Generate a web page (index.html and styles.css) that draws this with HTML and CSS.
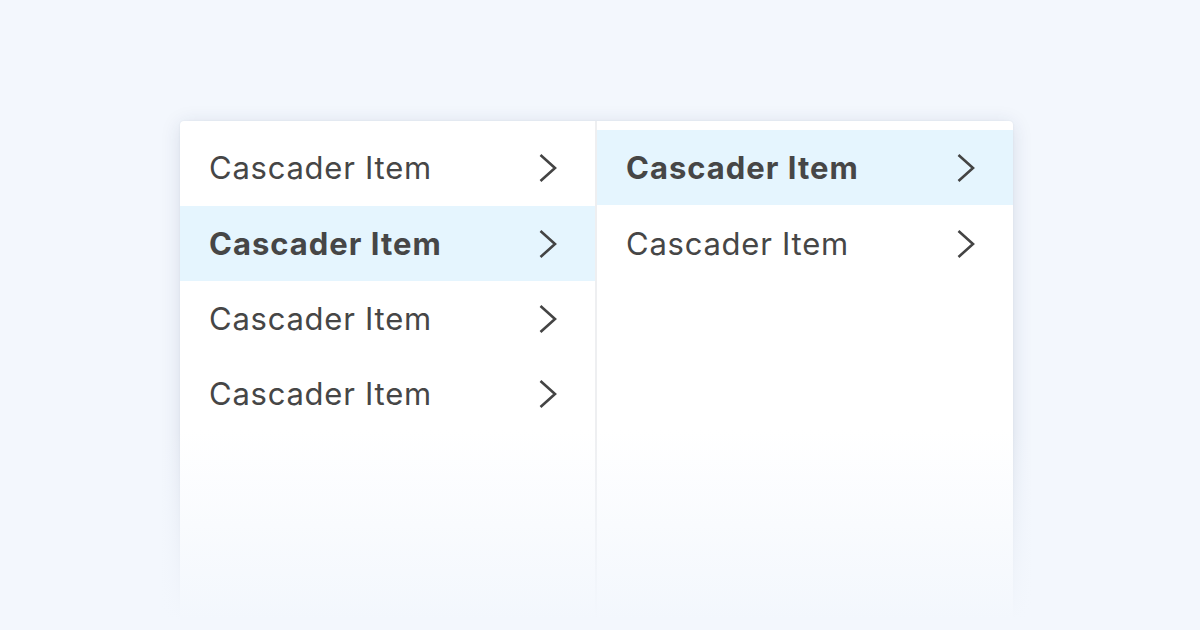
FILE: index.html
```html
<!DOCTYPE html>
<html>
<head>
<meta charset="utf-8">
<link rel="stylesheet" href="styles.css">
</head>
<body>
<div class="stage">
  <div class="cascader">
    <ul class="column">
      <li class="item"><span class="label">Cascader Item</span><svg class="chev" viewBox="0 0 18 30"><path d="M1.5 2 L16 15 L1.5 28"/></svg></li>
      <li class="item active"><span class="label">Cascader Item</span><svg class="chev" viewBox="0 0 18 30"><path d="M1.5 2 L16 15 L1.5 28"/></svg></li>
      <li class="item"><span class="label">Cascader Item</span><svg class="chev" viewBox="0 0 18 30"><path d="M1.5 2 L16 15 L1.5 28"/></svg></li>
      <li class="item"><span class="label">Cascader Item</span><svg class="chev" viewBox="0 0 18 30"><path d="M1.5 2 L16 15 L1.5 28"/></svg></li>
    </ul>
    <ul class="column">
      <li class="item active"><span class="label">Cascader Item</span><svg class="chev" viewBox="0 0 18 30"><path d="M1.5 2 L16 15 L1.5 28"/></svg></li>
      <li class="item"><span class="label">Cascader Item</span><svg class="chev" viewBox="0 0 18 30"><path d="M1.5 2 L16 15 L1.5 28"/></svg></li>
    </ul>
  </div>
  <div class="fade"></div>
</div>
</body>
</html>
```

FILE: styles.css
```css
* { box-sizing: border-box; }
html, body {
  margin: 0;
  padding: 0;
  width: 1200px;
  height: 630px;
  overflow: hidden;
  background: #f3f7fd;
  font-family: Inter, "Liberation Sans", sans-serif;
}
.stage {
  position: relative;
  width: 1200px;
  height: 630px;
  padding: 121px 0 0 180px;
  overflow: hidden;
}
.cascader {
  display: flex;
  width: 833px;
  height: 560px;
  background: #fff;
  border-radius: 4px;
  box-shadow: 0 3px 20px rgba(30, 50, 90, 0.13), 0 0 2px rgba(30, 50, 90, 0.08);
  overflow: hidden;
}
.column {
  list-style: none;
  margin: 0;
  padding: 9px 0 0 0;
  width: 415px;
  flex: none;
}
.column .item:first-child + .item { margin-top: 1px; }
.column + .column {
  border-left: 2px solid #eeeff1;
  width: 418px;
}
.item {
  display: flex;
  align-items: center;
  justify-content: space-between;
  height: 75px;
  padding: 0 38px 0 29px;
  font-size: 31px;
  color: #464646;
  letter-spacing: 0.75px;
}
.item.active {
  background: #e5f5fe;
  font-weight: 700;
  letter-spacing: 1px;
}
.chev {
  width: 18px;
  height: 30px;
  fill: none;
  stroke: #444;
  stroke-width: 2.6;
  stroke-linecap: butt;
  stroke-linejoin: miter;
}
.fade {
  position: absolute;
  left: 0;
  right: 0;
  bottom: 0;
  height: 200px;
  background: linear-gradient(to bottom, rgba(243, 247, 253, 0), #f3f7fd 95%);
  pointer-events: none;
}
```
